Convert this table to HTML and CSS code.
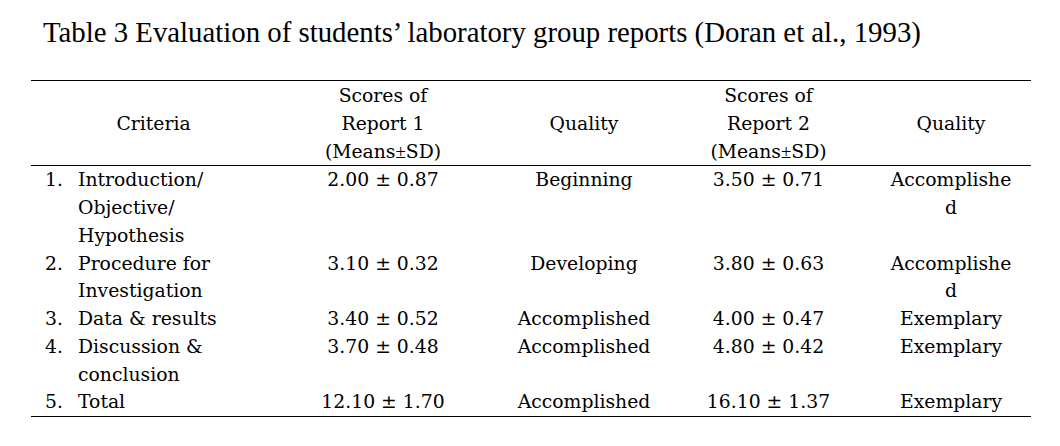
FILE: index.html
```html
<!DOCTYPE html>
<html>
<head>
<meta charset="utf-8">
<link rel="stylesheet" href="styles.css">
</head>
<body>
<div class="page">
  <h1 class="title">Table 3 Evaluation of students’ laboratory group reports (Doran et al., 1993)</h1>
  <table class="tbl">
    <colgroup>
      <col class="c1"><col class="c2"><col class="c3"><col class="c4"><col class="c5">
    </colgroup>
    <thead>
      <tr>
        <th>Criteria</th>
        <th>Scores of<br>Report 1<br>(Means<span class="pm">±</span>SD)</th>
        <th class="q1">Quality</th>
        <th>Scores of<br>Report 2<br>(Means<span class="pm">±</span>SD)</th>
        <th>Quality</th>
      </tr>
    </thead>
    <tbody>
      <tr>
        <td class="crit"><div class="item"><span class="num">1.</span><span class="txt">Introduction/<br>Objective/<br>Hypothesis</span></div></td>
        <td>2.00 ± 0.87</td>
        <td class="q1">Beginning</td>
        <td>3.50 ± 0.71</td>
        <td>Accomplishe<br>d</td>
      </tr>
      <tr>
        <td class="crit"><div class="item"><span class="num">2.</span><span class="txt">Procedure for<br>Investigation</span></div></td>
        <td>3.10 ± 0.32</td>
        <td class="q1">Developing</td>
        <td>3.80 ± 0.63</td>
        <td>Accomplishe<br>d</td>
      </tr>
      <tr>
        <td class="crit"><div class="item"><span class="num">3.</span><span class="txt">Data &amp; results</span></div></td>
        <td>3.40 ± 0.52</td>
        <td class="q1">Accomplished</td>
        <td>4.00 ± 0.47</td>
        <td>Exemplary</td>
      </tr>
      <tr>
        <td class="crit"><div class="item"><span class="num">4.</span><span class="txt">Discussion &amp;<br>conclusion</span></div></td>
        <td>3.70 ± 0.48</td>
        <td class="q1">Accomplished</td>
        <td>4.80 ± 0.42</td>
        <td>Exemplary</td>
      </tr>
      <tr class="last">
        <td class="crit"><div class="item"><span class="num">5.</span><span class="txt">Total</span></div></td>
        <td>12.10 ± 1.70</td>
        <td class="q1">Accomplished</td>
        <td>16.10 ± 1.37</td>
        <td>Exemplary</td>
      </tr>
    </tbody>
  </table>
</div>
</body>
</html>
```

FILE: styles.css
```css
html, body {
  margin: 0;
  padding: 0;
  background: #ffffff;
  color: #000000;
}
.page {
  padding: 14px 0 0 31px;
}
.title {
  margin: 0 0 0 12px;
  font-family: "Liberation Serif", "Times New Roman", serif;
  font-weight: normal;
  font-size: 28.8px;
  line-height: 36px;
  height: 66px;
  letter-spacing: 0;
}
.tbl {
  border-collapse: collapse;
  table-layout: fixed;
  width: 1000px;
  font-family: "DejaVu Serif", serif;
  font-size: 18.8px;
  line-height: 27.75px;
  border-top: 1.5px solid #000;
}
.c1 { width: 245px; }
.c2 { width: 214px; }
.c3 { width: 176px; }
.c4 { width: 205px; }
.c5 { width: 160px; }
.tbl th, .tbl td {
  padding: 0;
  text-align: center;
  vertical-align: top;
  font-weight: normal;
}
.tbl thead th {
  vertical-align: middle;
  border-bottom: 1.5px solid #000;
  padding-top: 1px;
}
.tbl .q1 {
  padding-left: 12px;
}
.pm {
  font-family: "Liberation Serif", serif;
}
.tbl td.crit {
  text-align: left;
}
.item {
  display: flex;
  padding-left: 14px;
}
.num {
  width: 33px;
  flex: none;
}
.tbl tr.last td {
  border-bottom: 1.5px solid #000;
}
```
